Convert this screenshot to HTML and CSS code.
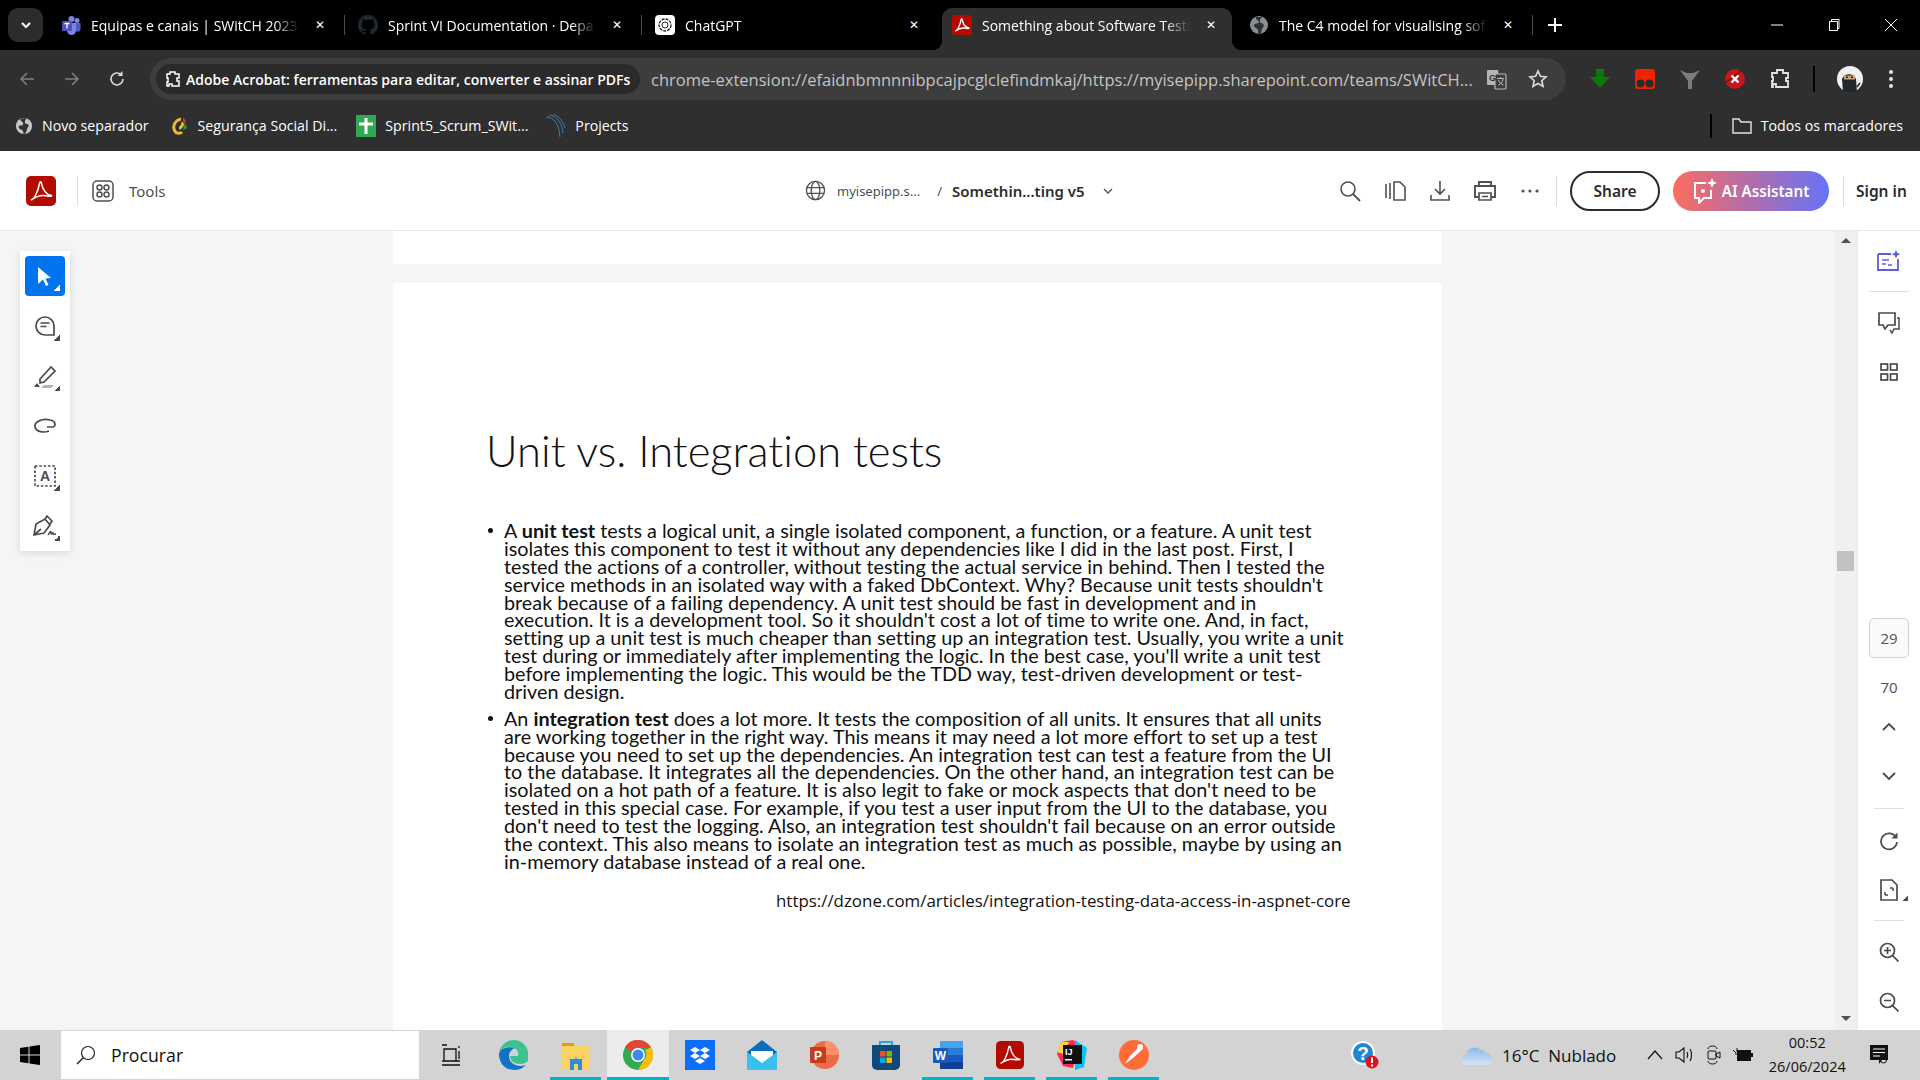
FILE: index.html
```html
<!DOCTYPE html>
<html lang="pt">
<head>
    <meta charset="UTF-8">
    <title>Something about Software Testing</title>
    <link rel="stylesheet" href="styles.css">
</head>
<body>
    <div class="tabstrip">
        <div class="tab-menu"><svg width="14" height="14" viewBox="0 0 14 14"><path d="M3 5l4 4 4-4" fill="none" stroke="#fff" stroke-width="2"/></svg></div>
        <div class="tab sep">
            <svg class="fav" width="20" height="20" viewBox="0 0 20 20"><circle cx="16" cy="5.500" r="2.500" fill="#7b83eb"/><circle cx="10.500" cy="4" r="3" fill="#7b83eb"/><path d="M13 8h6.500v5.500a3 3 0 0 1-6 .5z" fill="#5059c9"/><path d="M6 8h9v7.500a4.500 4.500 0 0 1-9 0z" fill="#7b83eb"/><rect x="1" y="6" width="10" height="10" rx="1" fill="#4b53bc"/><path d="M3.500 8.500h5M6 8.500v5" stroke="#fff" stroke-width="1.300"/></svg>
            <span class="tab-title">Equipas e canais | SWitCH 2023</span>
            <span class="tab-x">✕</span>
        </div>
        <div class="tab sep">
            <svg class="fav" width="20" height="20" viewBox="0 0 16 16"><path fill="#1e2a30" d="M8 0C3.580 0 0 3.580 0 8c0 3.540 2.290 6.530 5.470 7.590.4.070.55-.17.55-.38 0-.19-.01-.82-.01-1.490-2.010.37-2.530-.49-2.690-.94-.09-.23-.48-.94-.82-1.130-.28-.15-.68-.52-.01-.53.630-.01 1.080.58 1.230.82.720 1.210 1.870.870 2.330.660.070-.520.280-.870.510-1.070-1.780-.2-3.640-.890-3.640-3.950 0-.870.310-1.590.820-2.150-.080-.2-.360-1.020.080-2.120 0 0 .670-.210 2.200.820a7.600 7.600 0 0 1 4 0c1.530-1.040 2.200-.820 2.200-.820.440 1.100.160 1.920.080 2.120.510.560.820 1.270.820 2.150 0 3.070-1.870 3.750-3.650 3.950.290.250.540.730.540 1.480 0 1.070-.010 1.930-.010 2.200 0 .210.150.460.550.380A8 8 0 0 0 16 8c0-4.420-3.580-8-8-8z"/></svg>
            <span class="tab-title">Sprint VI Documentation · Depa</span>
            <span class="tab-x">✕</span>
        </div>
        <div class="tab">
            <svg class="fav" width="20" height="20" viewBox="0 0 20 20"><rect width="20" height="20" rx="4" fill="#fff"/><circle cx="10" cy="10" r="6" fill="none" stroke="#222" stroke-width="1.300" stroke-dasharray="3 1"/><circle cx="10" cy="10" r="3" fill="none" stroke="#222"/></svg>
            <span class="tab-title">ChatGPT</span>
            <span class="tab-x">✕</span>
        </div>
        <div class="tab tab-active">
            <svg class="fav" width="20" height="20" viewBox="0 0 30 30"><rect width="30" height="30" rx="5" fill="#b30b00"/><path d="M5 24c3-.5 7-8 8.500-16.500.3-2.500 1.500-2.500 2 0C16.500 13 20 19 25.500 19.500c1 .8-3 1-6 .3-4-.8-9 .5-14.500 4.200z" fill="none" stroke="#fff" stroke-width="2"/></svg>
            <span class="tab-title">Something about Software Testi</span>
            <span class="tab-x">✕</span>
        </div>
        <div class="tab sep">
            <svg class="fav" width="20" height="20" viewBox="0 0 20 20"><circle cx="10" cy="10" r="9" fill="#8a8d91"/><path d="M7 2c-1 3 3 3 3 5s-4 1-5 3 3 3 4 5-1 3 1 4c3 0 2-3 3-5s3-3 1-5-3 0-3-3 2-3 2-4z" fill="#303134"/></svg>
            <span class="tab-title">The C4 model for visualising sof</span>
            <span class="tab-x">✕</span>
        </div>
        <svg class="new-tab" width="14" height="14" viewBox="0 0 14 14"><path d="M7 0v14M0 7h14" stroke="#fff" stroke-width="2"/></svg>
        <div class="win-controls">
            <svg width="14" height="14" viewBox="0 0 14 14"><path d="M1 7h12" stroke="#fff"/></svg>
            <svg width="14" height="14" viewBox="0 0 14 14"><path d="M2.500 3.500h8v9h-8zM4.500 3.500v-2h7.500v9h-1.500" fill="none" stroke="#fff"/></svg>
            <svg width="14" height="14" viewBox="0 0 14 14"><path d="M1 1l12 12M13 1L1 13" stroke="#fff"/></svg>
        </div>
    </div>

    <div class="toolbar">
        <svg class="nav-ic" width="18" height="18" viewBox="0 0 18 18"><path d="M16 9H3M9 3L3 9l6 6" fill="none" stroke="#7d7d7d" stroke-width="1.600"/></svg>
        <svg class="nav-ic" width="18" height="18" viewBox="0 0 18 18"><path d="M2 9h13M9 3l6 6-6 6" fill="none" stroke="#7d7d7d" stroke-width="1.600"/></svg>
        <svg class="nav-ic" width="18" height="18" viewBox="0 0 18 18"><path d="M15 9a6 6 0 1 1-2-4.500" fill="none" stroke="#dcdcdc" stroke-width="1.600"/><path d="M14.500 1v5h-5z" fill="#dcdcdc"/></svg>
        <div class="omnibox">
            <div class="chip">
                <svg width="16" height="18" viewBox="0 0 16 18"><path d="M2 4h3V2h5v2h4v4h-2v3h2v5H7v-2H4v2H2v-4h1V8H2z" fill="none" stroke="#fff" stroke-width="1.500"/></svg>
                <span>Adobe Acrobat: ferramentas para editar, converter e assinar PDFs</span>
            </div>
            <span class="url">chrome-extension://efaidnbmnnnibpcajpcglclefindmkaj/https://myisepipp.sharepoint.com/teams/SWitCH...</span>
            <svg class="omni-ic" width="22" height="22" viewBox="0 0 22 22"><path d="M1 3a1 1 0 0 1 1-1h10l2 15H2a1 1 0 0 1-1-1z" fill="#b5b5b5"/><rect x="9" y="6" width="11" height="15" rx="1" fill="#3d3d3d" stroke="#b5b5b5" stroke-width="1.200"/><text x="3" y="12.500" font-size="9" font-weight="700" fill="#333" font-family="Liberation Sans">G</text><path d="M11 10.500h7M14.500 9v1.500M17 11c-.5 3-2 5-4.500 6M12.500 12c.8 2.500 2.500 4 5 5" fill="none" stroke="#b5b5b5"/></svg>
            <svg class="omni-ic star" width="20" height="20" viewBox="0 0 20 20"><path d="M10 2l2.400 5.300 5.600.6-4.200 3.800 1.200 5.700L10 14.500l-5 2.900 1.200-5.700L2 7.900l5.600-.6z" fill="none" stroke="#d8d8d8" stroke-width="1.700"/></svg>
        </div>
        <div class="extensions">
            <svg width="20" height="20" viewBox="0 0 20 20"><path d="M6 0h8v8h6L10 19 0 8h6z" fill="#0b7a0b"/></svg>
            <svg width="20" height="20" viewBox="0 0 20 20"><rect width="20" height="20" rx="3" fill="#ee2400"/><circle cx="5.500" cy="14.500" r="4" fill="#2b2b2b"/><circle cx="14.500" cy="14.500" r="4" fill="#2b2b2b"/></svg>
            <svg width="20" height="20" viewBox="0 0 20 20"><path d="M0 1l7 3h6l7-3-8 11v8H8v-8z" fill="#7c7c7c"/></svg>
            <svg width="20" height="20" viewBox="0 0 20 20"><circle cx="10" cy="10" r="10" fill="#c5171c"/><path d="M0 14L16 2" stroke="#3a0c0c" stroke-width="1"/><path d="M6.500 6.500l7 7M13.500 6.500l-7 7" stroke="#fff" stroke-width="2.400"/></svg>
            <svg width="20" height="20" viewBox="0 0 20 20"><path d="M2 4h5V1h6v3h5v5h-2v3h2v6H6v-3H3v3H2v-6h1V8H2z" fill="none" stroke="#e4e4e4" stroke-width="1.800"/></svg>
            <span class="ext-sep"></span>
            <svg width="26" height="26" viewBox="0 0 26 26"><circle cx="13" cy="13" r="13" fill="#f1f1f1"/><path d="M5 13a7.500 7.500 0 0 1 14 0l1 13H6z" fill="#23262b"/><rect x="7" y="9.500" width="11" height="4" fill="#c9a27a"/><rect x="9" y="10.500" width="2" height="1.500" fill="#222"/><rect x="14" y="10.500" width="2" height="1.500" fill="#222"/><path d="M20 21l3-4" stroke="#23262b" stroke-width="1.500"/></svg>
            <svg width="6" height="20" viewBox="0 0 6 20"><circle cx="3" cy="3" r="2" fill="#e4e4e4"/><circle cx="3" cy="10" r="2" fill="#e4e4e4"/><circle cx="3" cy="17" r="2" fill="#e4e4e4"/></svg>
        </div>
    </div>

    <div class="bookmarks">
        <div class="bm bm-first"><svg width="18" height="18" viewBox="0 0 20 20"><circle cx="10" cy="10" r="9" fill="#c8c8c8"/><path d="M6 2c-1 3 4 3 3 6S4 8 4 11s4 2 5 5 0 3 1 3c3-1 3-5 4-7s2-3 0-4-3 0-3-3 2-2 2-4z" fill="#333"/></svg><span>Novo separador</span></div>
        <div class="bm bm-ss"><svg width="18" height="20" viewBox="0 0 18 20"><path d="M10 3C5 4 2 8 3 13s6 5 8 3" fill="none" stroke="#e8b93a" stroke-width="3"/><path d="M8 12c2 0 4-3 4-6" fill="none" stroke="#e8b93a" stroke-width="3"/><path d="M12 1l3 4-3 3z" fill="#d03a2a"/><path d="M14 7l2 5-4 2z" fill="#2b9a3e"/></svg><span>Segurança Social Di...</span></div>
        <div class="bm bm-sp"><svg width="20" height="22" viewBox="0 0 20 22"><rect width="20" height="22" rx="1" fill="#33a852"/><path d="M10 3v16M3 9h14" stroke="#fff" stroke-width="3"/></svg><span>Sprint5_Scrum_SWit...</span></div>
        <div class="bm bm-pr"><svg width="20" height="24" viewBox="0 0 20 24"><path d="M0 3c8 0 13 7 14 20M3 1c8 1 13 8 14 18M7 0c6 2 10 7 12 14" fill="none" stroke="#3f7fb0" stroke-width="1"/></svg><span>Projects</span></div>
        <span class="bm-sep"></span>
        <div class="bm"><svg width="20" height="16" viewBox="0 0 20 16"><path d="M1 15V1h6l2 3h10v11z" fill="none" stroke="#e4e4e4" stroke-width="1.400"/></svg><span>Todos os marcadores</span></div>
    </div>

    <header class="acro-bar">
        <svg class="acro-logo" width="30" height="30" viewBox="0 0 30 30"><rect width="30" height="30" rx="5" fill="#b30b00"/><path d="M5 24c3-.5 7-8 8.500-16.500.3-2.500 1.500-2.500 2 0C16.500 13 20 19 25.500 19.500c1 .8-3 1-6 .3-4-.8-9 .5-14.500 4.200z" fill="none" stroke="#fff" stroke-width="1.500"/></svg>
        <span class="acro-sep"></span>
        <svg class="tools-ic" width="22" height="22" viewBox="0 0 22 22"><rect x="1" y="1" width="20" height="20" rx="4" fill="none" stroke="#505050" stroke-width="1.500"/><circle cx="7.500" cy="7.500" r="2.500" fill="none" stroke="#505050" stroke-width="1.500"/><circle cx="14.500" cy="7.500" r="2.500" fill="none" stroke="#505050" stroke-width="1.500"/><circle cx="7.500" cy="14.500" r="2.500" fill="none" stroke="#505050" stroke-width="1.500"/><circle cx="14.500" cy="14.500" r="2.500" fill="none" stroke="#505050" stroke-width="1.500"/></svg>
        <span class="tools-label">Tools</span>
        <div class="doc-crumb">
            <svg width="21" height="21" viewBox="0 0 22 22"><g fill="none" stroke="#505050" stroke-width="1.400"><circle cx="11" cy="11" r="9.500"/><ellipse cx="11" cy="11" rx="4.500" ry="9.500"/><path d="M2 8h18M2 14h18"/></g></svg>
            <span class="crumb-site">myisepipp.s...</span>
            <span class="crumb-slash">/</span>
            <span class="crumb-doc">Somethin...ting v5</span>
            <svg width="10" height="8" viewBox="0 0 10 8"><path d="M1 2l4 4 4-4" fill="none" stroke="#505050" stroke-width="1.300"/></svg>
        </div>
        <div class="acro-actions">
            <svg width="22" height="22" viewBox="0 0 22 22"><circle cx="9" cy="9" r="7" fill="none" stroke="#505050" stroke-width="1.600"/><path d="M14 14l7 7" stroke="#505050" stroke-width="1.800"/></svg>
            <svg width="22" height="22" viewBox="0 0 22 22"><path d="M2 4v14M6 3v16M10 2h6l5 5v13H10z" fill="none" stroke="#505050" stroke-width="1.600"/></svg>
            <svg width="22" height="22" viewBox="0 0 22 22"><path d="M11 1v13M6 9l5 5 5-5M2 15v5h18v-5" fill="none" stroke="#505050" stroke-width="1.600"/></svg>
            <svg width="22" height="22" viewBox="0 0 22 22"><path d="M5 6V2h12v4M5 17H1V6h20v11h-4" fill="none" stroke="#505050" stroke-width="1.900"/><path d="M5 13h12v7H5zM8 16.500h6" fill="none" stroke="#505050" stroke-width="1.700"/></svg>
            <svg width="22" height="22" viewBox="0 0 22 22"><circle cx="4" cy="11" r="1.600" fill="#505050"/><circle cx="11" cy="11" r="1.600" fill="#505050"/><circle cx="18" cy="11" r="1.600" fill="#505050"/></svg>
        </div>
        <span class="acro-sep acro-sep-2"></span>
        <button class="share-btn">Share</button>
        <button class="ai-btn"><svg width="24" height="26" viewBox="0 0 24 26"><path d="M13 5H2v15h4v5l5-5h7v-8" fill="none" stroke="#fff" stroke-width="2"/><path d="M19 0l1.500 3.500L24 5l-3.500 1.500L19 10l-1.500-3.500L14 5l3.500-1.500z" fill="#fff"/><circle cx="10" cy="13" r="2" fill="#fff"/></svg>AI Assistant</button>
        <span class="acro-sep acro-sep-3"></span>
        <span class="sign-in">Sign in</span>
    </header>

    <main class="viewer">
        <div class="tool-panel">
            <div class="tool tool-on"><svg width="16" height="20" viewBox="0 0 16 20"><path d="M1 1l13 11-5.500 .5 3 6.500-2.500 1-3-6.500L1 18z" fill="#fff"/></svg></div>
            <div class="tool more"><svg width="22" height="22" viewBox="0 0 22 22"><path d="M11 2a9 9 0 1 0 0 18h9v-9a9 9 0 0 0-9-9z" fill="none" stroke="#4b4b4b" stroke-width="1.700"/><path d="M6.500 8h9M6.500 11.500h6" stroke="#4b4b4b" stroke-width="1.500"/></svg></div>
            <div class="tool more"><svg width="24" height="24" viewBox="0 0 24 24"><path d="M7 15L18 3l4 4-11 11-4 1z" fill="none" stroke="#4b4b4b" stroke-width="1.700"/><path d="M1 23l3-4 3 4z" fill="#4b4b4b"/><path d="M11 21h10l-3 3H8z" fill="#b3b3b3"/></svg></div>
            <div class="tool"><svg width="24" height="18" viewBox="0 0 24 18"><path d="M14 10h6c3-1 3-6-3-7C9 1 1 5 2 10c1 5 9 6 14 4" fill="none" stroke="#4b4b4b" stroke-width="1.700"/></svg></div>
            <div class="tool more"><svg width="24" height="24" viewBox="0 0 24 24"><rect x="2" y="2" width="20" height="20" fill="none" stroke="#4b4b4b" stroke-width="1.700" stroke-dasharray="2.500 1.800"/><text x="12" y="17" text-anchor="middle" font-size="14" font-weight="700" fill="#4b4b4b" font-family="Liberation Sans">A</text></svg></div>
            <div class="tool more"><svg width="24" height="24" viewBox="0 0 24 24"><path d="M1 21l2-11 9-5 5 6-6 8zM1 21l7-6M12 5l2-3 5 5-2 3" fill="none" stroke="#4b4b4b" stroke-width="1.700"/><path d="M15 21c2-3 3-5 3-2s2-2 2 0 1 1 3 1" fill="none" stroke="#4b4b4b" stroke-width="1.500"/></svg></div>
        </div>

        <div class="doc-area">
            <div class="page page-prev"></div>
            <article class="page slide">
                <h1>Unit vs. Integration tests</h1>
                <ul>
                    <li>
                        <span class="ln">A <b>unit test</b> tests a logical unit, a single isolated component, a function, or a feature. A unit test</span>
                        <span class="ln">isolates this component to test it without any dependencies like I did in the last post. First, I</span>
                        <span class="ln">tested the actions of a controller, without testing the actual service in behind. Then I tested the</span>
                        <span class="ln">service methods in an isolated way with a faked DbContext. Why? Because unit tests shouldn't</span>
                        <span class="ln">break because of a failing dependency. A unit test should be fast in development and in</span>
                        <span class="ln">execution. It is a development tool. So it shouldn't cost a lot of time to write one. And, in fact,</span>
                        <span class="ln">setting up a unit test is much cheaper than setting up an integration test. Usually, you write a unit</span>
                        <span class="ln">test during or immediately after implementing the logic. In the best case, you'll write a unit test</span>
                        <span class="ln">before implementing the logic. This would be the TDD way, test-driven development or test-</span>
                        <span class="ln">driven design.</span>
                    </li>
                    <li>
                        <span class="ln">An <b>integration test</b> does a lot more. It tests the composition of all units. It ensures that all units</span>
                        <span class="ln">are working together in the right way. This means it may need a lot more effort to set up a test</span>
                        <span class="ln">because you need to set up the dependencies. An integration test can test a feature from the UI</span>
                        <span class="ln">to the database. It integrates all the dependencies. On the other hand, an integration test can be</span>
                        <span class="ln">isolated on a hot path of a feature. It is also legit to fake or mock aspects that don't need to be</span>
                        <span class="ln">tested in this special case. For example, if you test a user input from the UI to the database, you</span>
                        <span class="ln">don't need to test the logging. Also, an integration test shouldn't fail because on an error outside</span>
                        <span class="ln">the context. This also means to isolate an integration test as much as possible, maybe by using an</span>
                        <span class="ln">in-memory database instead of a real one.</span>
                    </li>
                </ul>
                <p class="source">https://dzone.com/articles/integration-testing-data-access-in-aspnet-core</p>
            </article>
        </div>

        <div class="scrollbar">
            <span class="arrow-up"></span>
            <span class="thumb"></span>
            <span class="arrow-down"></span>
        </div>

        <aside class="rail">
            <svg class="r-ai" width="24" height="22" viewBox="0 0 24 22"><path d="M14 4H2a1 1 0 0 0-1 1v15h20V9" fill="none" stroke="#5c5ce0" stroke-width="1.800"/><path d="M5 10h7M5 14h4M11 15h4" stroke="#5c5ce0" stroke-width="1.600"/><path d="M19 0l1.300 3 3 1.300-3 1.300-1.300 3-1.300-3-3-1.300 3-1.300z" fill="#5c5ce0"/></svg>
            <span class="rail-hr"></span>
            <svg class="r-comment" width="24" height="22" viewBox="0 0 24 22"><path d="M2 1h16v12h-7l-3 4-2-4H2z" fill="none" stroke="#4b4b4b" stroke-width="1.700"/><path d="M20 6h2v11h-5l-2 4-2-3" fill="none" stroke="#4b4b4b" stroke-width="1.500"/></svg>
            <svg class="r-grid" width="18" height="18" viewBox="0 0 18 18"><g fill="none" stroke="#4b4b4b" stroke-width="1.700"><rect x="1" y="1" width="6.500" height="6"/><rect x="10.500" y="1" width="6.500" height="6"/><rect x="1" y="11" width="6.500" height="6"/><rect x="10.500" y="11" width="6.500" height="6"/></g></svg>
            <div class="page-box">29</div>
            <div class="page-total">70</div>
            <svg class="r-up" width="14" height="10" viewBox="0 0 14 10"><path d="M1 8l6-6 6 6" fill="none" stroke="#4b4b4b" stroke-width="1.800"/></svg>
            <svg class="r-down" width="14" height="10" viewBox="0 0 14 10"><path d="M1 2l6 6 6-6" fill="none" stroke="#4b4b4b" stroke-width="1.800"/></svg>
            <span class="rail-hr rail-hr-1"></span>
            <svg class="r-rotate" width="20" height="20" viewBox="0 0 20 20"><path d="M17 6.500A8 8 0 1 0 18 11" fill="none" stroke="#4b4b4b" stroke-width="1.700"/><path d="M18.500 1.500v6h-6z" fill="#4b4b4b"/></svg>
            <div class="r-fit more-s"><svg width="20" height="22" viewBox="0 0 20 22"><path d="M2 1h11l5 5v15H2z" fill="none" stroke="#4b4b4b" stroke-width="1.700"/><path d="M6 16v-3M6 16h3M14 9v3M14 9h-3" stroke="#4b4b4b" stroke-width="1.500"/></svg></div>
            <span class="rail-hr rail-hr-2"></span>
            <svg class="r-zi" width="20" height="20" viewBox="0 0 20 20"><circle cx="8.500" cy="8.500" r="7" fill="none" stroke="#4b4b4b" stroke-width="1.700"/><path d="M13.500 13.500l6 6M5 8.500h7M8.500 5v7" stroke="#4b4b4b" stroke-width="1.700"/></svg>
            <svg class="r-zo" width="20" height="20" viewBox="0 0 20 20"><circle cx="8.500" cy="8.500" r="7" fill="none" stroke="#4b4b4b" stroke-width="1.700"/><path d="M13.500 13.500l6 6M5 8.500h7" stroke="#4b4b4b" stroke-width="1.700"/></svg>
        </aside>
    </main>

    <footer class="taskbar">
        <svg class="start" width="20" height="20" viewBox="0 0 20 20"><path d="M0 3l8.500-1.200V9.500H0zM9.500 1.600L20 0v9.500H9.500zM0 10.500h8.500v7.700L0 17zM9.500 10.500H20V20L9.500 18.400z" fill="#000"/></svg>
        <div class="search-box">
            <svg width="20" height="20" viewBox="0 0 20 20"><circle cx="12" cy="8" r="6.500" fill="none" stroke="#222" stroke-width="1.200"/><path d="M7.500 12.500L1 19" stroke="#222" stroke-width="1.400"/></svg>
            <span>Procurar</span>
        </div>
        <div class="task-apps">
            <div class="app app-view"><svg width="20" height="22" viewBox="0 0 20 22"><path d="M1 1h5M1 21h18M3 5h12v12H3zM1 17h18M18 2v2M18 7v8" fill="none" stroke="#111" stroke-width="1.300"/></svg></div>
            <div class="app"><svg width="30" height="30" viewBox="0 0 30 30"><path d="M15 0C7 0 1 6 0 13c2-4 7-7 12-6 6 1 8 5 7 9h-8c0 5 5 8 10 8 3 0 6-1 8-3V12C28 5 22 0 15 0z" fill="#3ec28f"/><path d="M0 14c0 9 6 16 15 16 5 0 9-2 12-5-8 3-17-1-17-9 0-4 3-7 6-8-7-2-15 0-16 6z" fill="#1273c4"/></svg></div>
            <div class="app on"><svg width="28" height="30" viewBox="0 0 28 30"><path d="M0 3h12v6H0z" fill="#e0a000"/><path d="M0 6h28v24H0z" fill="#fad165"/><path d="M8 30V19h5l1-2 1 2h5v11h-4v-6h-4v6z" fill="#2d8fd5"/></svg></div>
            <div class="app on current"><svg width="30" height="30" viewBox="0 0 30 30"><circle cx="15" cy="15" r="15" fill="#34a853"/><path d="M15 0a15 15 0 0 1 13 7.500H15A7.500 7.500 0 0 0 8 12L2 7A15 15 0 0 1 15 0z" fill="#ea4335"/><path d="M28 7.500A15 15 0 0 1 15 30l6.500-11A7.500 7.500 0 0 0 22 10z" fill="#fbbc05"/><circle cx="15" cy="15" r="7" fill="#fff"/><circle cx="15" cy="15" r="5.500" fill="#4285f4"/></svg></div>
            <div class="app"><svg width="30" height="30" viewBox="0 0 30 30"><rect width="30" height="30" fill="#0d6efd"/><path d="M10 7l5 3-5 3-5-3zM20 7l5 3-5 3-5-3zM10 13l5 3-5 3-5-3zM20 13l5 3-5 3-5-3zM15 18l5 3-5 3-5-3z" fill="#fff"/></svg></div>
            <div class="app"><svg width="30" height="30" viewBox="0 0 30 30"><path d="M15 0l15 12v18H0V12z" fill="#0f6cbd"/><path d="M4 11h22v10l-11 5-11-5z" fill="#fff"/><path d="M0 12l15 11 15-11v18H0z" fill="#38c0f0"/></svg></div>
            <div class="app"><svg width="30" height="30" viewBox="0 0 30 30"><circle cx="16" cy="15" r="14" fill="#ed6c47"/><path d="M16 1a14 14 0 0 1 14 14H16z" fill="#ff8f6b"/><rect x="1" y="7" width="16" height="16" rx="1" fill="#c43e1c"/><text x="9" y="20" text-anchor="middle" font-size="12" font-weight="700" fill="#fff" font-family="Liberation Sans">P</text></svg></div>
            <div class="app"><svg width="30" height="30" viewBox="0 0 30 30"><path d="M9 6V2h12v4" fill="none" stroke="#28a8ea" stroke-width="2"/><path d="M1 5h28v20a5 5 0 0 1-5 5H6a5 5 0 0 1-5-5z" fill="#114a7a"/><rect x="9" y="11" width="5.500" height="5.500" fill="#f25022"/><rect x="15.500" y="11" width="5.500" height="5.500" fill="#7fba00"/><rect x="9" y="17.500" width="5.500" height="5.500" fill="#00a4ef"/><rect x="15.500" y="17.500" width="5.500" height="5.500" fill="#ffb900"/></svg></div>
            <div class="app on"><svg width="30" height="28" viewBox="0 0 30 28"><rect x="7" width="23" height="28" rx="1" fill="#2b7cd3"/><rect x="7" width="23" height="7" fill="#41a5ee"/><rect x="7" y="14" width="23" height="7" fill="#185abd"/><rect x="7" y="21" width="23" height="7" fill="#103f91"/><rect y="7" width="15" height="15" rx="1" fill="#185abd"/><text x="7.500" y="19" text-anchor="middle" font-size="12" font-weight="700" fill="#fff" font-family="Liberation Sans">W</text></svg></div>
            <div class="app on"><svg width="28" height="30" viewBox="0 0 30 30"><rect width="30" height="30" rx="5" fill="#b30b00"/><path d="M5 24c3-.5 7-8 8.500-16.500.3-2.500 1.500-2.500 2 0C16.500 13 20 19 25.500 19.500c1 .8-3 1-6 .3-4-.8-9 .5-14.500 4.200z" fill="none" stroke="#fff" stroke-width="1.500"/></svg></div>
            <div class="app on"><svg width="30" height="30" viewBox="0 0 30 30"><path d="M4 2l12-2 6 4-6 24-10-2-6-12z" fill="#fe2857"/><path d="M4 2l8 0-6 12-6-2z" fill="#ffd33a"/><path d="M18 0l12 8-3 19-9 3z" fill="#07c3f2"/><rect x="6" y="5" width="19" height="19" fill="#111"/><text x="8" y="15" font-size="9" font-weight="700" fill="#fff" font-family="Liberation Sans">IJ</text><rect x="8" y="19" width="7" height="1.500" fill="#fff"/></svg></div>
            <div class="app on"><svg width="30" height="30" viewBox="0 0 30 30"><circle cx="15" cy="15" r="15" fill="#ff6c37"/><path d="M21 6l3 3-10 9-8 6 5-8z" fill="#fff"/><circle cx="21" cy="7" r="3" fill="#fff"/></svg></div>
        </div>
        <svg class="tray-help" width="28" height="28" viewBox="0 0 28 28"><circle cx="12" cy="12" r="12" fill="#fff"/><circle cx="12" cy="12" r="10" fill="#1e88d8"/><text x="12" y="19" text-anchor="middle" font-size="19" font-weight="700" fill="#fff" font-family="Liberation Sans">?</text><circle cx="21" cy="21" r="6.500" fill="#d9141c"/><path d="M21 16.500v5.500M21 23.500v2" stroke="#fff" stroke-width="2"/></svg>
        <svg class="tray-cloud" width="30" height="20" viewBox="0 0 30 20"><defs><linearGradient id="cloud" x1="0" y1="0" x2="0" y2="1"><stop offset="0" stop-color="#8db8ec"/><stop offset="1" stop-color="#d6e4f2"/></linearGradient></defs><path d="M5 20a5 5 0 0 1-1-10 9 9 0 0 1 15-5 6 6 0 0 1 5 3 6 6 0 0 1 1 12z" fill="url(#cloud)"/></svg>
        <span class="weather">16°C&nbsp; Nublado</span>
        <div class="tray-icons">
            <svg width="16" height="10" viewBox="0 0 16 10"><path d="M1 9l7-8 7 8" fill="none" stroke="#111" stroke-width="1.200"/></svg>
            <svg width="20" height="20" viewBox="0 0 20 20"><path d="M1 7h3l5-4v14l-5-4H1zM12 7c1 2 1 4 0 6M15 4c2 3 2 9 0 12" fill="none" stroke="#111" stroke-width="1.100"/></svg>
            <svg width="14" height="22" viewBox="0 0 14 22"><rect x="1" y="7" width="8" height="8" rx="1" fill="none" stroke="#111"/><path d="M9 10l4-2v6l-4-2zM1 5c0-4 9-4 9 0M1 17c0 4 9 4 9 0" fill="none" stroke="#111"/></svg>
            <svg width="20" height="14" viewBox="0 0 20 14"><path d="M0 2l3 3M4 0v4M2 6h3" stroke="#111"/><rect x="4.500" y="2.500" width="13" height="10" fill="#111" stroke="#111"/><rect x="18" y="5" width="2" height="4" fill="#111"/></svg>
        </div>
        <div class="clock"><span>00:52</span><span>26/06/2024</span></div>
        <svg class="notif" width="18" height="20" viewBox="0 0 18 20"><path d="M0 0h18v15h-6l-3 4v-4H0z" fill="#111"/><path d="M3 4h12M3 7.500h12M3 11h7" stroke="#fff" stroke-width="1.200"/><circle cx="13.500" cy="15" r="3" fill="none" stroke="#111"/></svg>
    </footer>
</body>
</html>
```

FILE: styles.css
```css
* {
    box-sizing: border-box;
}

html, body {
    margin: 0;
    padding: 0;
    height: 1080px;
    width: 1920px;
    overflow: hidden;
}

body {
    font-family: "Open Sans", "Liberation Sans", sans-serif;
    display: flex;
    flex-direction: column;
    background-color: #fff;
}

/* chrome tabs */
.tabstrip {
    height: 50px;
    background-color: #000;
    display: flex;
    align-items: center;
    color: #fff;
    font-size: 14px;
}

.tab-menu {
    width: 35px;
    height: 34px;
    margin-left: 8px;
    margin-right: 8px;
    border-radius: 10px;
    background-color: #2c2c2c;
    display: flex;
    align-items: center;
    justify-content: center;
    flex: none;
}

.tab {
    position: relative;
    width: 297px;
    height: 50px;
    flex: none;
    display: flex;
    align-items: center;
    padding-left: 10px;
}

.tab.sep::after {
    content: "";
    position: absolute;
    right: 3px;
    top: 15px;
    width: 1px;
    height: 20px;
    background-color: #4b4b4b;
}

.fav {
    flex: none;
}

.tab-title {
    margin-left: 10px;
    width: 208px;
    white-space: nowrap;
    -webkit-mask-image: linear-gradient(90deg, #000 88%, transparent 100%);
    mask-image: linear-gradient(90deg, #000 88%, transparent 100%);
}

.tab-x {
    margin-left: 16px;
    font-size: 12px;
    font-family: "DejaVu Sans", sans-serif;
}

.tab-active {
    background-color: #2f2f2f;
    align-self: flex-end;
    height: 42px;
    padding-bottom: 8px;
    border-radius: 10px 10px 0 0;
    width: 290px;
    margin-right: 7px;
}

.tab-active::before,
.tab-active::after {
    content: "";
    position: absolute;
    bottom: 0;
    width: 10px;
    height: 10px;
}

.tab-active::before {
    left: -10px;
    background: radial-gradient(circle at 0 0, #000 10px, #2f2f2f 10.500px);
}

.tab-active::after {
    right: -10px;
    background: radial-gradient(circle at 100% 0, #000 10px, #2f2f2f 10.500px);
}

.new-tab {
    margin-left: 12px;
    flex: none;
}

.win-controls {
    margin-left: auto;
    display: flex;
    gap: 43px;
    padding-right: 22px;
}

/* chrome toolbar */
.toolbar {
    height: 50px;
    background-color: #2f2f2f;
    display: flex;
    align-items: center;
    padding-top: 8px;
    padding-left: 18px;
}

.nav-ic {
    margin-right: 27px;
    flex: none;
}

.omnibox {
    margin-left: -3px;
    width: 1416px;
    height: 42px;
    border-radius: 21px;
    background-color: #3d3d3d;
    display: flex;
    align-items: center;
    padding-left: 6px;
    flex: none;
}

.chip {
    height: 30px;
    width: 484px;
    border-radius: 15px;
    background-color: #2a2a2a;
    display: flex;
    align-items: center;
    gap: 5px;
    padding-left: 9px;
    color: #fff;
    font-size: 14px;
    font-weight: 600;
    white-space: nowrap;
    flex: none;
}

.url {
    margin-left: 11px;
    width: 826px;
    color: #c4c4c4;
    font-size: 16.500px;
    white-space: nowrap;
    flex: none;
}

.omni-ic {
    margin-left: 9px;
    flex: none;
}

.omni-ic.star {
    margin-left: 20px;
}

.extensions {
    flex: 1;
    display: flex;
    align-items: center;
    padding-left: 24px;
    gap: 25px;
}

.ext-sep {
    width: 2px;
    height: 26px;
    background-color: #000;
    margin: 0 -3px 0 -2px;
}

/* chrome bookmarks */
.bookmarks {
    height: 51px;
    background-color: #2f2f2f;
    display: flex;
    align-items: center;
    color: #fff;
    font-size: 14.200px;
    padding-left: 15px;
    padding-right: 17px;
}

.bm {
    display: flex;
    align-items: center;
    gap: 9px;
    white-space: nowrap;
}

.bm-ss {
    margin-left: 22px;
}

.bm-sp {
    margin-left: 19px;
}

.bm-pr {
    margin-left: 18px;
}

.bm-sep {
    margin-left: auto;
    margin-right: 20px;
    width: 2px;
    height: 24px;
    background-color: #000;
}

/* acrobat header */
.acro-bar {
    height: 80px;
    flex: none;
    background-color: #fff;
    border-bottom: 1px solid #eaeaea;
    display: flex;
    align-items: center;
    padding-left: 26px;
    color: #505050;
    font-family: "Noto Sans", sans-serif;
}

.acro-sep {
    width: 1px;
    height: 30px;
    background-color: #dedede;
    margin-left: 21px;
    flex: none;
}

.tools-ic {
    margin-left: 14px;
}

.tools-label {
    margin-left: 15px;
    font-size: 15px;
    width: 39px;
}

.doc-crumb {
    margin-left: 637px;
    display: flex;
    align-items: center;
    width: 534px;
    font-size: 13px;
    flex: none;
}

.crumb-site {
    margin-left: 11px;
    white-space: nowrap;
}

.crumb-slash {
    margin-left: 17px;
}

.crumb-doc {
    margin-left: 10px;
    font-size: 15px;
    font-weight: 600;
    color: #2c2c2c;
    white-space: nowrap;
}

.doc-crumb svg:last-child {
    margin-left: 18px;
}

.acro-actions {
    display: flex;
    gap: 23px;
    flex: none;
}

.acro-sep-2 {
    margin-left: 15px;
    margin-right: 13px;
}

.acro-sep-3 {
    margin-left: 14px;
    margin-right: 12px;
}

.share-btn {
    width: 90px;
    height: 40px;
    border: 2px solid #2c2c2c;
    border-radius: 20px;
    background-color: #fff;
    color: #2c2c2c;
    font: 600 15.500px "Noto Sans", sans-serif;
    flex: none;
    padding: 0;
}

.ai-btn {
    margin-left: 13px;
    width: 156px;
    height: 40px;
    border: none;
    border-radius: 20px;
    background: linear-gradient(90deg, #fa6e5f 0%, #a96db3 55%, #6674f8 100%);
    color: #fff;
    font: 600 15.200px "Noto Sans", sans-serif;
    display: flex;
    align-items: center;
    justify-content: center;
    gap: 5px;
    flex: none;
    padding: 0;
}

.sign-in {
    font-size: 15.500px;
    font-weight: 600;
    color: #2c2c2c;
    white-space: nowrap;
}

/* viewer */
.viewer {
    position: relative;
    flex: 1;
    display: flex;
    min-height: 0;
    background-color: #f5f5f5;
    overflow: hidden;
}

.tool-panel {
    position: absolute;
    left: 20px;
    top: 20px;
    width: 50px;
    height: 300px;
    padding: 5px;
    background-color: #fff;
    box-shadow: 0 2px 8px rgba(0, 0, 0, 0.12);
    display: flex;
    flex-direction: column;
    gap: 10px;
}

.tool {
    position: relative;
    width: 40px;
    height: 40px;
    flex: none;
    display: flex;
    align-items: center;
    justify-content: center;
    border-radius: 4px;
}

.tool-on {
    background-color: #0073ee;
}

.tool.more::after,
.tool-on::after,
.more-s::after {
    content: "";
    position: absolute;
    right: 5px;
    bottom: 5px;
    width: 6px;
    height: 6px;
    background: linear-gradient(135deg, transparent 50%, #4b4b4b 50%);
}

.tool-on::after {
    background: linear-gradient(135deg, transparent 50%, #fff 50%);
}

.doc-area {
    width: 1835px;
    flex: none;
    display: flex;
    flex-direction: column;
    align-items: center;
    gap: 19px;
}

.page {
    width: 1049px;
    background-color: #fff;
    flex: none;
}

.page-prev {
    height: 33px;
}

.slide {
    height: 800px;
    padding-left: 93px;
    color: #111;
    font-family: "Lato", sans-serif;
    font-variant-ligatures: none;
    white-space: nowrap;
}

.slide h1 {
    margin: 0;
    padding-top: 140px;
    font-size: 43.500px;
    font-weight: 300;
    line-height: 54px;
}

.slide ul {
    margin: 45px 0 0;
    padding: 0 0 0 18px;
    font-size: 19.800px;
    line-height: 17.870px;
}

.slide li {
    margin-bottom: 9px;
    list-style: none;
    position: relative;
}

.slide li::before {
    content: "";
    position: absolute;
    left: -16px;
    top: 6px;
    width: 5px;
    height: 5px;
    border-radius: 50%;
    background-color: #111;
}

.ln {
    display: block;
}

.source {
    margin: 20px 0 0;
    padding-left: 290px;
    font-family: "Open Sans", sans-serif;
    font-size: 16.900px;
    line-height: 20px;
}

.scrollbar {
    position: relative;
    width: 22px;
    flex: none;
    background-color: #f0f0f0;
}

.thumb {
    position: absolute;
    left: 2px;
    top: 320px;
    width: 17px;
    height: 20px;
    background-color: #c2c2c2;
}

.arrow-up,
.arrow-down {
    position: absolute;
    left: 6px;
    border-left: 5px solid transparent;
    border-right: 5px solid transparent;
}

.arrow-up {
    top: 7px;
    border-bottom: 5px solid #505050;
}

.arrow-down {
    bottom: 9px;
    border-top: 5px solid #505050;
}

.rail {
    flex: 1;
    background-color: #fff;
    border-left: 1px solid #e8e8e8;
    display: flex;
    flex-direction: column;
    align-items: center;
    color: #505050;
}

.rail > * {
    flex: none;
}

.r-ai { margin-top: 19px; }
.rail-hr { width: 40px; height: 1px; margin-top: 19px; background-color: #e0e0e0; }
.r-comment { margin-top: 20px; }
.r-grid { margin-top: 29px; }

.page-box {
    margin-top: 237px;
    width: 40px;
    height: 40px;
    border: 1px solid #d2d2d2;
    border-radius: 5px;
    background-color: #fafafa;
    display: flex;
    align-items: center;
    justify-content: center;
    font-size: 15px;
}

.page-total { margin-top: 19px; font-size: 15px; line-height: 20px; }
.r-up { margin-top: 25px; }
.r-down { margin-top: 39px; }
.rail-hr-1 { margin-top: 27px; width: 30px; }
.r-rotate { margin-top: 22px; }
.r-fit { position: relative; margin-top: 28px; padding: 0 8px; height: 22px; }
.r-fit.more-s::after { right: -1px; bottom: 0; }
.rail-hr-2 { margin-top: 19px; width: 30px; }
.r-zi { margin-top: 21px; }
.r-zo { margin-top: 30px; }

/* windows taskbar */
.taskbar {
    height: 50px;
    flex: none;
    background-color: #d3d3d3;
    display: flex;
    align-items: center;
    color: #111;
}

.start {
    margin-left: 20px;
    flex: none;
}

.search-box {
    margin-left: 21px;
    width: 358px;
    height: 48px;
    background-color: #fff;
    display: flex;
    align-items: center;
    gap: 15px;
    padding-left: 15px;
    font-size: 17.700px;
    flex: none;
}

.task-apps {
    display: flex;
    flex: none;
}

.app {
    position: relative;
    width: 62px;
    height: 50px;
    display: flex;
    align-items: center;
    justify-content: center;
    flex: none;
}

.app-view {
    width: 64px;
}

.app.on::after {
    content: "";
    position: absolute;
    left: 5px;
    right: 6px;
    bottom: 0;
    height: 3px;
    background-color: #00b4c3;
}

.app.current {
    background-color: #ececec;
}

.app.current::after {
    left: 0;
    right: 0;
}

.tray-help {
    margin-left: 186px;
    flex: none;
}

.tray-cloud {
    margin-left: 83px;
    flex: none;
}

.weather {
    margin-left: 10px;
    font-size: 17px;
    white-space: nowrap;
}

.tray-icons {
    margin-left: 31px;
    display: flex;
    align-items: center;
    gap: 12px;
    flex: none;
}

.clock {
    margin-left: 14px;
    width: 80px;
    display: flex;
    flex-direction: column;
    align-items: center;
    font-size: 14.500px;
    line-height: 24px;
    flex: none;
}

.notif {
    margin-left: 23px;
    flex: none;
}
```
